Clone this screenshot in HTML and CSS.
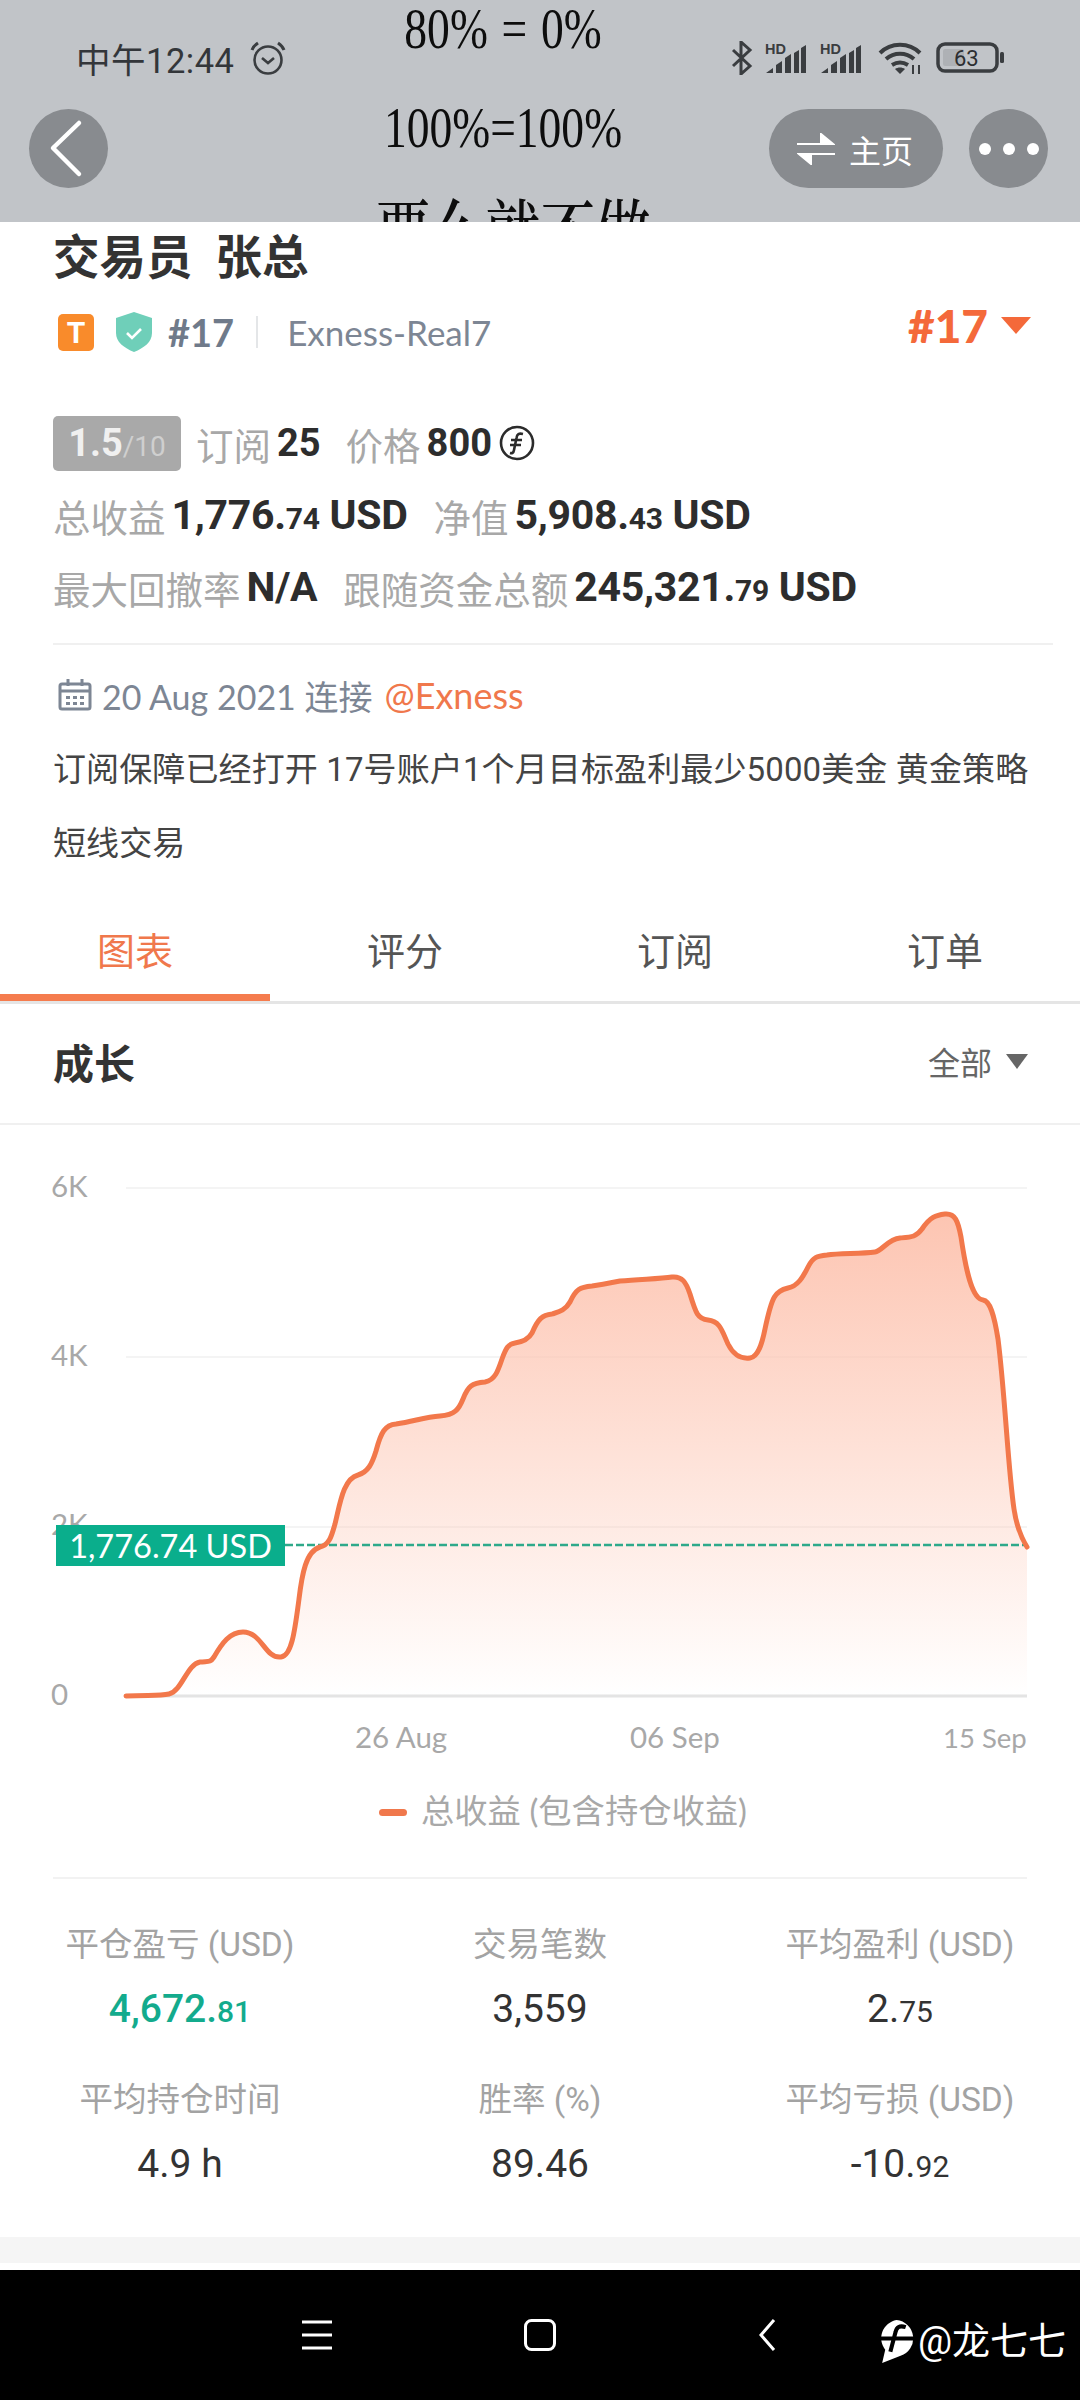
FILE: index.html
```html
<!DOCTYPE html>
<html lang="zh-CN">
<head>
<meta charset="utf-8">
<title>交易员 张总</title>
<link rel="stylesheet" href="styles.css">
</head>
<body>
<header class="top">
  <div class="poster">
    <div class="poster-line poster-first">80% = 0%</div>
    <div class="poster-line">100%=100%</div>
    <div class="poster-line poster-cjk">要么就不做</div>
  </div>
  <div class="status">
    <div class="status-left">
      <span class="clock">中午12:44</span>
      <svg class="ic-alarm" viewBox="0 0 36 36"><circle cx="18" cy="20" r="13.5" fill="none" stroke="#3a3d40" stroke-width="2.6"/><path d="M12 18l6 5 6-5" fill="none" stroke="#3a3d40" stroke-width="2.6"/><path d="M2 10c1-3 3-5 6-7M34 10c-1-3-3-5-6-7" fill="none" stroke="#3a3d40" stroke-width="3"/></svg>
    </div>
    <div class="status-right">
      <svg class="ic-bt" viewBox="0 0 22 34"><path d="M2 9l17 16-9 8V1l9 8L2 25" fill="none" stroke="#3a3d40" stroke-width="3"/></svg>
      <svg class="ic-signal" viewBox="0 0 42 32"><text x="0" y="12" class="hd">HD</text><path d="M1 31l7-5v5zM11 31v-8l6-4v12zM20 31V16l6-4v19zM29 31V11l5-3v23zM36 31V6l5-3v28z" fill="#3a3d40"/></svg>
      <svg class="ic-signal" viewBox="0 0 42 32"><text x="0" y="12" class="hd">HD</text><path d="M1 31l7-5v5zM11 31v-8l6-4v12zM20 31V16l6-4v19zM29 31V11l5-3v23zM36 31V6l5-3v28z" fill="#3a3d40"/></svg>
      <svg class="ic-wifi" viewBox="0 0 44 34"><path d="M2 12c11-11 29-11 40 0M8 18c8-7 20-7 28 0M14 24c5-3 11-3 16 0" fill="none" stroke="#3a3d40" stroke-width="4"/><path d="M22 33l-5-5c3-2 7-2 10 0z" fill="#3a3d40"/><path d="M35 33V24M41 33V24" stroke="#3a3d40" stroke-width="2"/></svg>
      <svg class="ic-batt" viewBox="0 0 70 32"><rect x="2" y="2" width="59" height="27" rx="7" fill="none" stroke="#3a3d40" stroke-width="3.5"/><rect x="7" y="7" width="21" height="17" rx="2" fill="#aeb1b5"/><text x="18" y="24" class="batt-num">63</text><rect x="64" y="10" width="4" height="11" rx="1.5" fill="#3a3d40"/></svg>
    </div>
  </div>
  <div class="toolbar">
    <div class="round-btn">
      <svg class="ic-back" viewBox="0 0 79 79"><path d="M50 14L24 39l26 26" fill="none" stroke="#fff" stroke-width="4.5" stroke-linecap="round" stroke-linejoin="round"/></svg>
    </div>
    <div class="toolbar-right">
      <div class="home-pill">
        <svg class="ic-swap" viewBox="0 0 38 32"><path d="M0 11h36L24 1v9M38 21H2l12 10v-9" fill="#fff" stroke="#fff" stroke-width="2"/></svg>
        <span>主页</span>
      </div>
      <div class="round-btn dots"><i></i><i></i><i></i></div>
    </div>
  </div>
</header>

<main class="page">
  <section class="profile">
    <h1 class="name">交易员&nbsp; 张总</h1>
    <div class="rank-row">
      <svg class="ic-t" viewBox="0 0 36 37"><rect width="36" height="37" rx="5" fill="#f98b2b"/><text x="18" y="29" class="t-letter">T</text></svg>
      <svg class="ic-shield" viewBox="0 0 36 40"><path d="M18 0l18 6v15c0 9-8 15-18 19C8 36 0 30 0 21V6z" fill="#6fcfb9"/><path d="M11 21l5 5 9-9" fill="none" stroke="#fff" stroke-width="2.6"/></svg>
      <span class="rank-no">#17</span>
      <span class="rank-sep"></span>
      <span class="server">Exness-Real7</span>
      <span class="rank-right">#17</span>
      <span class="tri-orange"></span>
    </div>

    <div class="metric-row metric-first">
      <span class="score"><b>1.5</b><small>/10</small></span>
      <span class="lbl">订阅</span><span class="num">25</span>
      <span class="lbl lbl-gap">价格</span><span class="num">800</span>
      <svg class="ic-coin" viewBox="0 0 36 36"><circle cx="18" cy="18" r="16" fill="none" stroke="#2b2b2b" stroke-width="2.6"/><path d="M24 9c-4-1-6 0-6.500 4L15 25c-.5 3-2 3.500-4 3M12 15h11M11 20h11" fill="none" stroke="#2b2b2b" stroke-width="2.6"/></svg>
    </div>
    <div class="metric-row">
      <span class="lbl">总收益</span><span class="num">1,776.<small>74</small> USD</span>
      <span class="lbl lbl-gap">净值</span><span class="num">5,908.<small>43</small> USD</span>
    </div>
    <div class="metric-row">
      <span class="lbl">最大回撤率</span><span class="num">N/A</span>
      <span class="lbl lbl-gap">跟随资金总额</span><span class="num">245,321.<small>79</small> USD</span>
    </div>

    <div class="rule-wide"></div>

    <div class="date-row">
      <svg class="ic-cal" viewBox="0 0 34 32"><rect x="2" y="5" width="30" height="25" rx="2" fill="none" stroke="#7d8694" stroke-width="3"/><path d="M2 12h30M10 0v7M24 0v7" stroke="#7d8694" stroke-width="3"/><path d="M8 17h4v3H8zM15 17h4v3h-4zM22 17h4v3h-4zM8 23h4v3H8zM15 23h4v3h-4zM22 23h4v3h-4z" fill="#7d8694"/></svg>
      <span>20 Aug 2021 连接</span>
      <span class="at">@Exness</span>
    </div>
    <p class="desc">订阅保障已经打开 17号账户1个月目标盈利最少5000美金 黄金策略短线交易</p>
  </section>

  <nav class="tabs">
    <div class="tab tab-on">图表</div>
    <div class="tab">评分</div>
    <div class="tab">订阅</div>
    <div class="tab">订单</div>
  </nav>

  <div class="sec-head">
    <h2 class="sec-title">成长</h2>
    <div class="sec-filter">全部<span class="tri-gray"></span></div>
  </div>

  <svg class="chart" viewBox="0 1126 1080 752">
    <defs>
      <linearGradient id="area" x1="0" y1="1216" x2="0" y2="1697" gradientUnits="userSpaceOnUse">
        <stop offset="0" stop-color="#fdc5b2"/>
        <stop offset="1" stop-color="#fdc5b2" stop-opacity="0"/>
      </linearGradient>
    </defs>
    <path class="grid" d="M126 1189H1027M126 1358H1027M126 1528H1027"/>
    <text class="axis" x="51" y="1198">6K</text>
    <text class="axis" x="51" y="1367">4K</text>
    <text class="axis" x="51" y="1536">2K</text>
    <text class="axis" x="51" y="1706">0</text>
    <path class="base" d="M126 1697H1027"/>
    <path fill="url(#area)" d="M126 1697C150 1696 160 1697 169 1695C182 1692 187 1665 200 1663C208 1662 210 1664 214 1658C222 1644 230 1633 243 1633C262 1633 265 1660 281 1658C292 1657 295 1630 299 1600C302 1575 306 1552 320 1548C330 1546 332 1535 335 1525C340 1505 343 1480 358 1476C368 1473 372 1465 376 1452C381 1433 385 1426 396 1425C415 1422 425 1418 440 1417C455 1416 459 1410 463 1400C468 1387 472 1384 485 1383C495 1381 498 1372 502 1360C506 1349 508 1345 515 1344C522 1343 528 1341 532 1334C538 1320 542 1316 552 1315C558 1313 565 1312 570 1303C576 1290 580 1288 592 1287C600 1286 610 1284 620 1282C640 1280 660 1280 672 1278C682 1277 686 1283 690 1295C696 1315 698 1320 708 1321C720 1322 722 1332 728 1345C734 1357 742 1360 750 1359C758 1358 762 1345 765 1330C772 1297 775 1292 788 1289C798 1287 803 1278 808 1268C813 1258 817 1257 827 1256C840 1254 860 1255 875 1253C882 1252 888 1240 900 1239C912 1238 916 1238 922 1230C930 1218 936 1216 945 1215C955 1214 958 1222 961 1238C966 1272 972 1300 983 1301C990 1302 994 1315 998 1340C1005 1395 1008 1470 1014 1510C1017 1530 1022 1540 1027 1548V1697Z"/>
    <path class="dash" d="M285 1546H1027"/>
    <path class="line" d="M126 1697C150 1696 160 1697 169 1695C182 1692 187 1665 200 1663C208 1662 210 1664 214 1658C222 1644 230 1633 243 1633C262 1633 265 1660 281 1658C292 1657 295 1630 299 1600C302 1575 306 1552 320 1548C330 1546 332 1535 335 1525C340 1505 343 1480 358 1476C368 1473 372 1465 376 1452C381 1433 385 1426 396 1425C415 1422 425 1418 440 1417C455 1416 459 1410 463 1400C468 1387 472 1384 485 1383C495 1381 498 1372 502 1360C506 1349 508 1345 515 1344C522 1343 528 1341 532 1334C538 1320 542 1316 552 1315C558 1313 565 1312 570 1303C576 1290 580 1288 592 1287C600 1286 610 1284 620 1282C640 1280 660 1280 672 1278C682 1277 686 1283 690 1295C696 1315 698 1320 708 1321C720 1322 722 1332 728 1345C734 1357 742 1360 750 1359C758 1358 762 1345 765 1330C772 1297 775 1292 788 1289C798 1287 803 1278 808 1268C813 1258 817 1257 827 1256C840 1254 860 1255 875 1253C882 1252 888 1240 900 1239C912 1238 916 1238 922 1230C930 1218 936 1216 945 1215C955 1214 958 1222 961 1238C966 1272 972 1300 983 1301C990 1302 994 1315 998 1340C1005 1395 1008 1470 1014 1510C1017 1530 1022 1540 1027 1548"/>
    <rect x="56" y="1526" width="229" height="41" fill="#0aae8c"/>
    <text class="tag" x="170.500" y="1559">1,776.74 USD</text>
    <text class="axis" x="355" y="1749">26 Aug</text>
    <text class="axis" x="630" y="1749">06 Sep</text>
    <text class="axis axis-last" x="943" y="1749">15 Sep</text>
    <rect x="379" y="1810" width="28" height="7" rx="3.500" fill="#f0784c"/>
    <text class="legend" x="421" y="1824">总收益 (包含持仓收益)</text>
  </svg>
  <div class="rule-inset"></div>

  <section class="stats">
    <div class="stat"><div class="stat-l">平仓盈亏 (USD)</div><div class="stat-v stat-green">4,672.<small>81</small></div></div>
    <div class="stat"><div class="stat-l">交易笔数</div><div class="stat-v">3,559</div></div>
    <div class="stat"><div class="stat-l">平均盈利 (USD)</div><div class="stat-v">2.<small>75</small></div></div>
    <div class="stat"><div class="stat-l">平均持仓时间</div><div class="stat-v">4.9 h</div></div>
    <div class="stat"><div class="stat-l">胜率 (%)</div><div class="stat-v">89.46</div></div>
    <div class="stat"><div class="stat-l">平均亏损 (USD)</div><div class="stat-v">-10.<small>92</small></div></div>
  </section>
  <div class="strip"></div>
</main>

<footer class="sysnav">
  <svg class="nav-menu" viewBox="0 0 30 30"><path d="M0 2h30M0 15h30M0 28h30" stroke="#fff" stroke-width="3"/></svg>
  <svg class="nav-home" viewBox="0 0 32 32"><rect x="1.500" y="1.500" width="29" height="29" rx="6" fill="none" stroke="#fff" stroke-width="3"/></svg>
  <svg class="nav-back" viewBox="0 0 18 32"><path d="M16 1L3 16l13 15" fill="none" stroke="#fff" stroke-width="3"/></svg>
  <div class="mark">
    <svg class="mark-logo" viewBox="0 0 36 42"><path d="M18 0a18 18 0 0 1 4 35L4 42l3-13A18 18 0 0 1 18 0z" fill="#fff"/><path d="M27 7c-6-2-9 0-10 5l-5 19M0 18h36" fill="none" stroke="#000" stroke-width="4"/></svg>
    <span>@龙七七</span>
  </div>
</footer>
</body>
</html>
```

FILE: styles.css
```css
* { box-sizing: border-box; }
html, body { margin: 0; padding: 0; }
body {
  width: 1080px;
  height: 2400px;
  overflow: hidden;
  display: flex;
  flex-direction: column;
  background: #fff;
  color: #333;
  font-family: Roboto, "Noto Sans CJK SC", sans-serif;
}
h1, h2, p { margin: 0; }

/* top area */
.top {
  position: relative;
  height: 222px;
  flex: none;
  overflow: hidden;
  background: #c1c4c8;
}
.poster {
  position: absolute;
  top: -21px;
  left: 0;
  right: 74px;
  text-align: center;
  color: #0d0d0d;
  font-family: "Liberation Serif", "Noto Serif CJK SC", "Noto Sans CJK SC", serif;
  font-size: 58px;
  line-height: 99px;
}
.poster-line { transform: scaleX(.785); }
.poster-first { word-spacing: 3px; }
.poster-cjk { font-size: 70px; margin-top: 8px; margin-left: 20px; font-weight: 500; }
.status {
  position: relative;
  height: 109px;
  padding: 7px 74px 0 76px;
  display: flex;
  align-items: center;
  justify-content: space-between;
}
.status-left { display: flex; align-items: center; gap: 16px; }
.clock { font-size: 34.500px; color: #33363a; letter-spacing: .5px; }
.ic-alarm { width: 36px; height: 36px; }
.status-right { display: flex; align-items: center; }
.ic-bt { width: 22px; height: 34px; margin-right: 12px; }
.ic-signal { width: 42px; height: 32px; margin-right: 13px; }
.ic-wifi { width: 44px; height: 34px; margin: 0 14px 0 3px; }
.ic-batt { width: 70px; height: 32px; }
.hd { font: 700 14.500px "Liberation Sans", sans-serif; fill: #3a3d40; }
.batt-num { font: 400 22px Roboto, sans-serif; fill: #2c2e31; }
.toolbar {
  position: relative;
  display: flex;
  justify-content: space-between;
  padding: 0 32px 0 29px;
}
.toolbar-right { display: flex; gap: 26px; }
.round-btn {
  width: 79px;
  height: 79px;
  border-radius: 50%;
  background: #888b8f;
}
.ic-back { display: block; width: 79px; height: 79px; }
.home-pill {
  width: 174px;
  height: 79px;
  border-radius: 40px;
  background: #888b8f;
  color: #fff;
  font-size: 32px;
  display: flex;
  align-items: center;
  gap: 14px;
  padding-left: 28px;
}
.ic-swap { width: 38px; height: 32px; }
.dots { display: flex; align-items: center; justify-content: center; gap: 12px; }
.dots i { width: 12px; height: 12px; border-radius: 50%; background: #fff; }

/* main */
.page { flex: 1; min-height: 0; }
.profile { padding: 0 27px 0 53px; }
.name {
  font-size: 46.500px;
  line-height: 72px;
  font-weight: 700;
  color: #333;
}
.rank-row { height: 76px; display: flex; align-items: center; padding-left: 5px; }
.ic-t { width: 36px; height: 37px; margin-right: 22px; }
.t-letter { font: 700 30px Roboto, sans-serif; fill: #fff; text-anchor: middle; }
.ic-shield { width: 36px; height: 40px; margin-right: 16px; }
.rank-no { font: 700 38px Lato, sans-serif; color: #6f7a8a; }
.rank-sep { width: 2px; height: 32px; margin: 0 29px 0 22px; background: #e4e6e8; }
.server { font: 400 35px Lato, sans-serif; color: #7d8694; }
.rank-right { margin: 0 0 14px auto; font: 900 46px Lato, sans-serif; color: #f4693a; }
.tri-orange {
  width: 0; height: 0;
  margin: 0 22px 14px 13px;
  border-left: 15px solid transparent;
  border-right: 15px solid transparent;
  border-top: 17px solid #f4693a;
}
.metric-row { height: 72px; display: flex; align-items: center; }
.metric-first { margin-top: 37px; }
.score {
  width: 128px;
  height: 55px;
  border-radius: 5px;
  background: #a9a9a9;
  color: #fff;
  display: flex;
  align-items: baseline;
  justify-content: center;
  line-height: 55px;
  margin-right: 15px;
}
.score b { font-size: 38px; font-weight: 700; color: #f0f0f0; }
.score small { font-size: 28px; color: #cfcfcf; }
.lbl { font-size: 37.500px; color: #a8a8a8; margin-right: 6px; }
.lbl-gap { margin-left: 26px; }
.metric-first .lbl-gap { margin-left: 25px; }
.num { font-size: 41px; letter-spacing: -.3px; font-weight: 700; color: #2d2d2d; }
.metric-first .num { font-size: 38px; letter-spacing: 0; }
.num small { font-size: 30px; }
.ic-coin { width: 36px; height: 36px; margin-left: 7px; }
.rule-wide { height: 2px; margin: 20px 0 0; background: #f0f0f0; }
.date-row {
  height: 72px;
  margin-top: 14px;
  margin-bottom: 2px;
  display: flex;
  align-items: center;
  padding-left: 5px;
  font: 400 34px Lato, "Noto Sans CJK SC", sans-serif;
  color: #7d8694;
}
.ic-cal { width: 34px; height: 32px; margin-right: 10px; }
.at { margin-left: 12px; font-size: 36px; color: #f0784c; }
.desc {
  font: 400 33px/74px Roboto, "Noto Sans CJK SC", sans-serif;
  letter-spacing: .12px;
  color: #444;
}
.tabs {
  display: grid;
  grid-template-columns: repeat(4, 270px);
  margin-top: 16px;
  border-bottom: 3px solid #e5e5e5;
}
.tab {
  height: 104px;
  padding-top: 5px;
  display: flex;
  align-items: center;
  justify-content: center;
  border-bottom: 7px solid transparent;
  font-size: 38px;
  color: #555;
}
.tab-on { color: #f0784c; border-bottom-color: #f57c4e; }
.sec-head {
  height: 121px;
  padding: 0 52px 5px 53px;
  display: flex;
  align-items: center;
  justify-content: space-between;
  border-bottom: 2px solid #f0f0f0;
}
.sec-title { font-size: 41px; font-weight: 700; color: #333; }
.sec-filter { font-size: 32px; color: #666; display: flex; align-items: center; }
.tri-gray {
  width: 0; height: 0;
  margin: 0 0 0 14px;
  border-left: 11px solid transparent;
  border-right: 11px solid transparent;
  border-top: 15px solid #666;
}
.chart { display: block; width: 1080px; height: 752px; }
.grid { stroke: #f4f4f4; stroke-width: 2; fill: none; }
.base { stroke: #e4e4e4; stroke-width: 3; fill: none; }
.line { stroke: #f2784b; stroke-width: 5; fill: none; stroke-linecap: round; }
.dash { stroke: #2ea98a; stroke-width: 2.500; stroke-dasharray: 8 3; fill: none; }
.axis { font: 400 29.500px Lato, sans-serif; fill: #a8a8a8; }
.axis-last { font-size: 27.500px; }
.tag { font: 400 32.500px Lato, sans-serif; fill: #fff; text-anchor: middle; }
.legend { font: 400 33.300px Lato, "Noto Sans CJK SC", sans-serif; fill: #a8a8a8; }
.rule-inset { height: 2px; margin: 0 53px; background: #f2f2f2; }
.stats {
  display: grid;
  grid-template-columns: repeat(3, 360px);
  row-gap: 35px;
  padding: 43px 0 40px;
  text-align: center;
}
.stat-l { font-size: 33.500px; line-height: 46px; color: #a3a3a3; }
.stat-v { font-size: 39px; line-height: 60px; margin-top: 11px; font-weight: 400; color: #333; }
.stat-v small { font-size: 30px; }
.stat-green { color: #13ab8d; font-weight: 500; }
.strip { height: 26px; background: #f5f5f5; }

/* system nav */
.sysnav {
  position: relative;
  height: 130px;
  flex: none;
  background: #000;
  display: flex;
  align-items: center;
  padding-left: 302px;
}
.nav-menu { width: 30px; height: 30px; }
.nav-home { width: 32px; height: 32px; margin-left: 192px; }
.nav-back { width: 18px; height: 32px; margin-left: 202px; }
.mark {
  position: absolute;
  left: 878px;
  top: 46px;
  display: flex;
  align-items: center;
  gap: 3px;
  color: #fff;
  font-size: 38px;
  line-height: 50px;
  white-space: nowrap;
}
.mark-logo { flex: none; width: 37px; height: 43px; }
```
